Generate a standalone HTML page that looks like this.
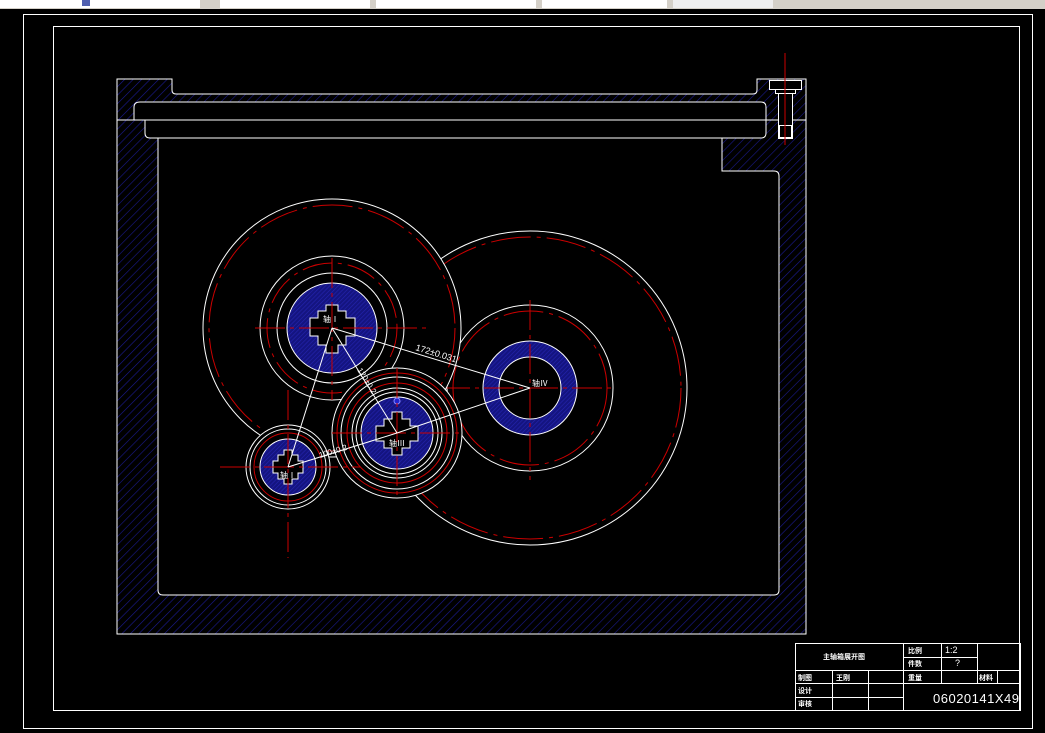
<!DOCTYPE html>
<html><head><meta charset="utf-8"><style>
html,body{margin:0;padding:0;background:#000;overflow:hidden}
svg{display:block}
</style></head><body>
<svg width="1045" height="733" viewBox="0 0 1045 733" xmlns="http://www.w3.org/2000/svg" font-family="Liberation Sans, Noto Sans CJK SC, sans-serif">
<defs>
<pattern id="h" width="6" height="6" patternUnits="userSpaceOnUse" patternTransform="rotate(45)">
<rect width="6" height="6" fill="#000"/><line x1="0" y1="0" x2="0" y2="6" stroke="#1a1a90" stroke-width="1.2"/>
</pattern>
<pattern id="h2" width="3" height="3" patternUnits="userSpaceOnUse" patternTransform="rotate(45)">
<rect width="3" height="3" fill="#141480"/><line x1="0" y1="0" x2="0" y2="3" stroke="#2424b0" stroke-width="1.2"/>
</pattern>
</defs>
<rect width="1045" height="733" fill="#000"/>
<rect x="0" y="0" width="1045" height="9" fill="#d4d0c8"/>
<rect x="0" y="0" width="200" height="8" fill="#fff"/>
<rect x="220" y="0" width="150" height="8" fill="#fff"/>
<rect x="376" y="0" width="160" height="8" fill="#fff"/>
<rect x="542" y="0" width="125" height="8" fill="#fff"/>
<rect x="673" y="0" width="100" height="8" fill="#eee"/>
<rect x="82" y="0" width="8" height="6" fill="#5060b0"/>
<rect x="23.5" y="14.5" width="1009" height="714" fill="none" stroke="#fff"/>
<rect x="53.5" y="26.5" width="966" height="684" fill="none" stroke="#fff"/>

<path d="M117 79 H172 V90 Q172 94 176 94 H753 Q757 94 757 90 V79 H806 V634 H117 Z" fill="url(#h)" stroke="#fff"/>
<path d="M158 138 H722 V171 H774 Q779 171 779 176 V590 Q779 595 774 595 H163 Q158 595 158 590 Z" fill="#000" stroke="#fff"/>
<path d="M140 102 H761 Q766 102 766 107 V120 H134 V107 Q134 102 140 102 Z" fill="#000" stroke="#fff"/>
<path d="M145 120 H766 V133 Q766 138 761 138 H150 Q145 138 145 133 Z" fill="#000" stroke="#fff"/>
<line x1="117" y1="120" x2="806" y2="120" stroke="#fff"/>
<rect x="769.5" y="80.5" width="32" height="9" fill="#000" stroke="#fff"/>
<rect x="775.5" y="89.5" width="20" height="4" fill="#000" stroke="#fff"/>
<rect x="778.5" y="93.5" width="14" height="45" fill="#000" stroke="#fff"/>
<rect x="779.5" y="125.5" width="12" height="12" fill="#000" stroke="#fff"/>
<line x1="785" y1="53" x2="785" y2="145" stroke="#c00"/>

<g fill="none">
<circle cx="530" cy="388" r="157" stroke="#fff"/>
<circle cx="530" cy="388" r="151" stroke="#c00" stroke-dasharray="40 6 4 6"/>
<circle cx="530" cy="388" r="83" stroke="#fff"/>
<circle cx="530" cy="388" r="77" stroke="#c00" stroke-dasharray="40 6 4 6"/>
<circle cx="530" cy="388" r="39" stroke="url(#h2)" stroke-width="16"/>
<circle cx="530" cy="388" r="47" stroke="#fff"/>
<circle cx="530" cy="388" r="31" stroke="#fff"/>
<line x1="440" y1="388" x2="612" y2="388" stroke="#c00" stroke-dasharray="30 5 4 5"/>
<line x1="530" y1="300" x2="530" y2="480" stroke="#c00" stroke-dasharray="30 5 4 5"/>

<circle cx="332" cy="328" r="129" fill="#000" stroke="#fff"/>
<circle cx="332" cy="328" r="123" stroke="#c00" stroke-dasharray="40 6 4 6"/>
<circle cx="332" cy="328" r="72" stroke="#fff"/>
<circle cx="332" cy="328" r="65" stroke="#c00" stroke-dasharray="30 6 4 6"/>
<circle cx="332" cy="328" r="55" stroke="#fff"/>
<circle cx="332" cy="328" r="45" fill="url(#h2)" stroke="#fff"/>
<path d="M326 305 H338 V311 H346 V318 H355 V336 H346 V345 H338 V353 H326 V345 H318 V336 H310 V318 H318 V311 H326 Z" fill="#000" stroke="#fff"/>
<line x1="255" y1="328" x2="428" y2="328" stroke="#c00" stroke-dasharray="30 5 4 5"/>
<line x1="332" y1="258" x2="332" y2="400" stroke="#c00" stroke-dasharray="30 5 4 5"/>

<circle cx="397" cy="433" r="65" fill="#000" stroke="#fff"/>
<circle cx="397" cy="433" r="60" stroke="#c00"/>
<circle cx="397" cy="433" r="56" stroke="#fff"/>
<circle cx="397" cy="433" r="50" stroke="#c00"/>
<circle cx="397" cy="433" r="45" stroke="#fff"/>
<circle cx="397" cy="433" r="41" stroke="#fff"/>
<circle cx="397" cy="433" r="36" fill="url(#h2)" stroke="#fff"/>
<path d="M392 412 H402 V419 H410 V426 H418 V441 H410 V448 H402 V455 H392 V448 H384 V441 H376 V426 H384 V419 H392 Z" fill="#000" stroke="#fff"/>
<circle cx="397" cy="401" r="3" fill="#22c" stroke="#88f"/>
<line x1="332" y1="433" x2="462" y2="433" stroke="#c00" stroke-dasharray="30 5 4 5"/>
<line x1="397" y1="368" x2="397" y2="500" stroke="#c00" stroke-dasharray="30 5 4 5"/>

<circle cx="288" cy="467" r="42" fill="#000" stroke="#fff"/>
<circle cx="288" cy="467" r="38" stroke="#fff"/>
<circle cx="288" cy="467" r="34" stroke="#c00"/>
<circle cx="288" cy="467" r="28" fill="url(#h2)" stroke="#fff"/>
<path d="M284 450 H292 V455 H298 V461 H303 V473 H298 V479 H292 V484 H284 V479 H278 V473 H273 V461 H278 V455 H284 Z" fill="#000" stroke="#fff"/>
<line x1="220" y1="467" x2="360" y2="467" stroke="#c00" stroke-dasharray="30 5 4 5"/>
<line x1="288" y1="390" x2="288" y2="558" stroke="#c00" stroke-dasharray="30 5 4 5"/>

<g stroke="#fff">
<line x1="332" y1="328" x2="530" y2="388"/>
<line x1="332" y1="328" x2="288" y2="467"/>
<line x1="332" y1="328" x2="397" y2="433"/>
<line x1="397" y1="433" x2="530" y2="388"/>
<line x1="288" y1="467" x2="397" y2="433"/>
</g>
</g>
<g fill="#fff" font-size="8">
<text x="323" y="322">轴Ⅰ</text>
<text x="389" y="446">轴Ⅲ</text>
<text x="280" y="478">轴Ⅰ</text>
<text x="532" y="386">轴Ⅳ</text>
<text x="415" y="350" transform="rotate(17 415 350)" font-size="9">172±0.031</text>
<text x="320" y="458" transform="rotate(-17 320 458)" font-size="8">100±0.2</text>
<text x="357" y="370" transform="rotate(58 357 370)" font-size="8">120±0.2</text>
</g>

<g stroke="#fff" fill="none">
<rect x="795.5" y="643.5" width="225" height="67"/>
<line x1="795" y1="670.5" x2="1020" y2="670.5"/>
<line x1="795" y1="683.5" x2="903" y2="683.5"/>
<line x1="795" y1="697.5" x2="903" y2="697.5"/>
<line x1="903" y1="657.5" x2="977" y2="657.5"/>
<line x1="903" y1="683.5" x2="1020" y2="683.5"/>
<line x1="903.5" y1="643" x2="903.5" y2="711"/>
<line x1="941.5" y1="643" x2="941.5" y2="683"/>
<line x1="977.5" y1="643" x2="977.5" y2="683"/>
<line x1="832.5" y1="670" x2="832.5" y2="711"/>
<line x1="868.5" y1="670" x2="868.5" y2="711"/>
<line x1="997.5" y1="670" x2="997.5" y2="683"/>
</g>
<g fill="#fff" font-size="7" font-weight="bold">
<text x="823" y="659">主轴箱展开图</text>
<text x="908" y="653">比例</text>
<text x="908" y="666">件数</text>
<text x="908" y="680">重量</text>
<text x="979" y="680">材料</text>
<text x="798" y="680">制图</text>
<text x="836" y="680">王刚</text>
<text x="798" y="693">设计</text>
<text x="798" y="706">审核</text>
</g>
<g fill="#fff" font-size="9">
<text x="945" y="653">1:2</text>
<text x="955" y="666">?</text>
</g>
<text x="933" y="703" fill="#fff" font-size="13" font-family="Liberation Sans, sans-serif" letter-spacing="0.5">06020141X49</text>
</svg>
</body></html>
